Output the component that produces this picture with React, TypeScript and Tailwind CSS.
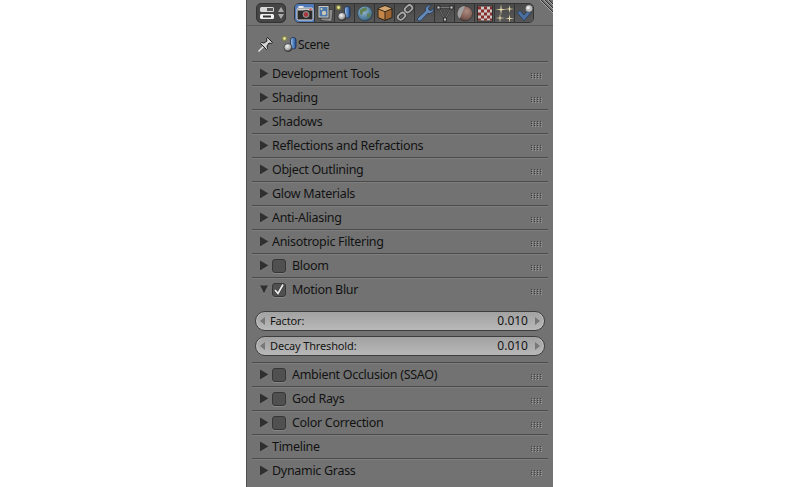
const font = "[font-family:'Noto_Sans',sans-serif]";

function SceneIcon({ id }: { id: string }) {
  return (
    <svg width="20" height="20" viewBox="0 0 20 20" className="shrink-0">
      <defs>
        <radialGradient id={id + "s"} cx="0.4" cy="0.35" r="0.7">
          <stop offset="0" stopColor="#f4f4f4" />
          <stop offset="0.6" stopColor="#a8a8a8" />
          <stop offset="1" stopColor="#2a2a2a" />
        </radialGradient>
        <linearGradient id={id + "c"} x1="0" x2="1" y1="0" y2="0">
          <stop offset="0" stopColor="#b4c6de" />
          <stop offset="0.5" stopColor="#5585c4" />
          <stop offset="1" stopColor="#1f4c92" />
        </linearGradient>
      </defs>
      <circle cx="3.500" cy="4.500" r="2.800" fill="#8b8a3c" opacity="0.7" />
      <circle cx="3.500" cy="4.500" r="1.400" fill="#e4e39a" />
      <rect x="9.500" y="3.500" width="5.500" height="11.500" rx="2.500" fill={`url(#${id}c)`} stroke="#1b2c4a" strokeWidth="0.800" />
      <circle cx="7" cy="13.500" r="4" fill={`url(#${id}s)`} stroke="#222" strokeWidth="0.600" />
    </svg>
  );
}

const tabIcons = [
  // camera
  <svg key="camera" width="20" height="20" viewBox="0 0 20 20" className="shrink-0">
    <rect x="2" y="5" width="16" height="12" rx="1.500" fill="#2b2b2b" stroke="#dedede" strokeWidth="1" />
    <rect x="3.500" y="3" width="5" height="2" fill="#e8e8e8" />
    <rect x="2.500" y="5.500" width="15" height="2" fill="#cfcfcf" />
    <circle cx="11" cy="11.500" r="4" fill="#8d8d8d" stroke="#111" strokeWidth="0.800" />
    <circle cx="11" cy="11.500" r="2.200" fill="#a8343c" />
    <rect x="14.500" y="5.800" width="2" height="1.200" fill="#d84545" />
  </svg>,
  // render layers
  <svg key="layers" width="20" height="20" viewBox="0 0 20 20" className="shrink-0">
    <rect x="6.500" y="6" width="11" height="12" fill="#8d8d8d" stroke="#3a3a3a" strokeWidth="0.800" transform="rotate(6 11 11)" />
    <rect x="3" y="2.500" width="11" height="12.500" fill="#c8c8c0" stroke="#2d2d2d" strokeWidth="0.800" />
    <rect x="4.500" y="4" width="8" height="9.500" fill="#4a76aa" />
    <circle cx="9" cy="10" r="2.200" fill="#c8c8b8" />
    <circle cx="6.500" cy="6" r="1" fill="#d8d8b4" />
  </svg>,
  <SceneIcon key="scene" id="tab" />,
  // world
  <svg key="world" width="20" height="20" viewBox="0 0 20 20" className="shrink-0">
    <defs>
      <radialGradient id="globe" cx="0.4" cy="0.35" r="0.75">
        <stop offset="0" stopColor="#9dbcd2" />
        <stop offset="0.7" stopColor="#4a7896" />
        <stop offset="1" stopColor="#263f52" />
      </radialGradient>
    </defs>
    <circle cx="10" cy="10.500" r="7.500" fill="url(#globe)" stroke="#2e3e4b" strokeWidth="0.700" />
    <path d="M5 7c2-2 5-3 7-2l-1 3-3 1-1 3-2-1zM12 11l3-1 1 2-2 3-2-1z" fill="#5f7f55" />
  </svg>,
  // object cube
  <svg key="cube" width="20" height="20" viewBox="0 0 20 20" className="shrink-0">
    <path d="M10 2 17.500 5.200v9.600L10 18 2.500 14.800V5.200z" fill="#2e2318" />
    <path d="M10 3 16.500 5.600 10 8.200 3.500 5.600z" fill="#d4a672" />
    <path d="M3.500 6.500l6 2.500v7.700l-6-2.500z" fill="#c48548" />
    <path d="M16.500 6.500l-6 2.500v7.700l6-2.500z" fill="#a06632" />
  </svg>,
  // constraints chain
  <svg key="chain" width="20" height="20" viewBox="0 0 20 20" fill="none" strokeLinecap="round" className="shrink-0">
    <g stroke="#333" strokeWidth="3.400">
      <rect x="9.500" y="3" width="8" height="5.500" rx="2.700" transform="rotate(-42 13.500 5.700)" />
      <rect x="2.500" y="10.500" width="8" height="5.500" rx="2.700" transform="rotate(-42 6.500 13.200)" />
    </g>
    <g stroke="#a8a8a8" strokeWidth="1.800">
      <rect x="9.500" y="3" width="8" height="5.500" rx="2.700" transform="rotate(-42 13.500 5.700)" />
      <rect x="2.500" y="10.500" width="8" height="5.500" rx="2.700" transform="rotate(-42 6.500 13.200)" />
    </g>
  </svg>,
  // wrench
  <svg key="wrench" width="20" height="20" viewBox="0 0 20 20" className="shrink-0">
    <path d="M3.500 18 2 15.800 10.500 8c-.6-2.500.5-5 3.200-5.800 1-.3 2-.2 2.600 0l-2.800 2.600.5 2.200 2.200.5 2.500-2.600c.4 2.200-.6 4.500-3 5.400-1 .4-2 .4-3 .1L5.500 18z" fill="#6288b8" stroke="#26364f" strokeWidth="0.800" />
  </svg>,
  // data mesh triangle
  <svg key="mesh" width="20" height="20" viewBox="0 0 20 20" className="shrink-0">
    <path d="M3.500 4.500H16.500L10 16.500z" fill="none" stroke="#2b2b2b" strokeWidth="1.600" />
    <path d="M3.500 4.500H16.500L10 16.500z" fill="none" stroke="#9a9a9a" strokeWidth="0.700" />
    <g fill="#cccccc" stroke="#1f1f1f" strokeWidth="0.800">
      <rect x="2" y="3" width="3" height="3" />
      <rect x="15" y="3" width="3" height="3" />
      <rect x="8.500" y="15" width="3" height="3" />
    </g>
  </svg>,
  // material
  <svg key="material" width="20" height="20" viewBox="0 0 20 20" className="shrink-0">
    <defs>
      <radialGradient id="mat" cx="0.6" cy="0.35" r="0.8">
        <stop offset="0" stopColor="#ad8b80" />
        <stop offset="0.6" stopColor="#7d5c54" />
        <stop offset="1" stopColor="#3d2c2a" />
      </radialGradient>
    </defs>
    <circle cx="10" cy="10.500" r="7.500" fill="url(#mat)" stroke="#2a2a2a" strokeWidth="0.600" />
    <path d="M10 3a7.500 7.500 0 0 0-5.300 12.800z" fill="#a0a0a0" />
  </svg>,
  // texture checker
  <svg key="texture" width="20" height="20" viewBox="0 0 20 20" className="shrink-0">
    <rect x="2.500" y="3" width="15" height="15" fill="#cfc8c4" stroke="#2d2d2d" />
    <path d="M3 3.500h3v3H3zM9 3.500h3v3H9zM15 3.500h2v3h-2zM6 6.500h3v3H6zM12 6.500h3v3h-3zM3 9.500h3v3H3zM9 9.500h3v3H9zM15 9.500h2v3h-2zM6 12.500h3v3H6zM12 12.500h3v3h-3zM3 15.500h3v2H3zM9 15.500h3v2H9zM15 15.500h2v2h-2z" fill="#862d2d" />
  </svg>,
  // particles
  <svg key="particles" width="20" height="20" viewBox="0 0 20 20" fill="#e8dcac" className="shrink-0">
    <path d="M6 1 6.700 6 12 6.600 6.700 7.200 6 12.500 5.300 7.200 0.500 6.600 5.300 6z" />
    <path d="M14.500 2 15.100 5.400 19 6 15.100 6.600 14.500 10 13.900 6.600 10 6 13.900 5.400z" />
    <path d="M5 10.500 5.600 14.500 10 15 5.600 15.600 5 19.500 4.400 15.600 0.500 15 4.400 14.500z" />
    <path d="M14.500 11 15.100 15 19.500 15.500 15.100 16 14.500 20 13.900 16 10 15.500 13.900 15z" />
  </svg>,
  // physics
  <svg key="physics" width="20" height="20" viewBox="0 0 20 20" className="shrink-0">
    <path d="M2 9.500 5 7.500 9 12 13 7 16.500 9 9 18z" fill="#4a6e9e" stroke="#22344f" strokeWidth="0.700" />
    <circle cx="14" cy="5.500" r="3.800" fill="#bcbcbc" stroke="#333" strokeWidth="0.600" />
    <circle cx="13.200" cy="4.700" r="1.600" fill="#e8e8e8" />
  </svg>,
];

function Grip() {
  return (
    <svg width="11" height="6" viewBox="0 0 11 6" fill="#3f3f3f">
      {[0, 2, 4].map((y) =>
        [0, 3, 6, 9].map((x) => (
          <g key={`${x}-${y}`}>
            <rect x={x + 1} y={y + 1} width="1" height="1" fill="#9a9a9a" />
            <rect x={x} y={y} width="1" height="1" />
          </g>
        )),
      )}
    </svg>
  );
}

function Arrow({ open }: { open?: boolean }) {
  return (
    <svg width="10" height="11" viewBox="0 0 10 11" className="shrink-0">
      {open ? (
        <>
          <path d="M1 2.500H9L5 10.500z" fill="#8a8a8a" />
          <path d="M1 1.500H9L5 9.500z" fill="#303030" />
        </>
      ) : (
        <>
          <path d="M1 1.500 9.500 6 1 11z" fill="#8a8a8a" />
          <path d="M1 0.500 9.500 5.500 1 10.500z" fill="#303030" />
        </>
      )}
    </svg>
  );
}

function Panel({ label, check, checked, open }: { label: string; check?: boolean; checked?: boolean; open?: boolean }) {
  return (
    <div className="h-[24px] mx-[5px] flex items-center pl-[7px] pr-[6px] border-t border-[#4a4a4a] shadow-[inset_0_1px_0_#7e7e7e]">
      <Arrow open={open} />
      {check && (
        <div className="ml-[3px] w-[14px] h-[14px] rounded-[3px] border border-[#363636] bg-[#505050] shadow-[0_1px_0_#858585] flex items-center justify-center shrink-0">
          {checked && (
            <svg width="14" height="14" viewBox="0 0 14 14" className="shrink-0">
              <path d="M3 7 6 10.500 11 1.500" fill="none" stroke="#333333" strokeWidth="3" />
              <path d="M3 7 6 10.500 11 1.500" fill="none" stroke="#ececec" strokeWidth="1.800" />
            </svg>
          )}
        </div>
      )}
      <span className={`${check ? "ml-[6px]" : "ml-[3px]"} text-[12.5px] tracking-[-0.3px] leading-[18px] text-[#121212]`}>{label}</span>
      <div className="ml-auto mt-[4px]">
        <Grip />
      </div>
    </div>
  );
}

function Slider({ label }: { label: string }) {
  return (
    <div className="h-[20px] rounded-full border border-[#3e3e3e] bg-gradient-to-b from-[#a2a2a2] to-[#b8b8b8] shadow-[inset_1px_0_0_#c4c4c4,inset_-1px_0_0_#c4c4c4] flex items-center px-[4px] text-[#141414]">
      <svg width="5" height="8" viewBox="0 0 5 8">
        <path d="M5 0V8L0 4z" fill="#777777" />
      </svg>
      <span className="ml-[5px] text-[11px] tracking-[-0.15px]">{label}</span>
      <span className="ml-auto mr-[7px] text-[12px]">0.010</span>
      <svg width="5" height="8" viewBox="0 0 5 8">
        <path d="M0 0V8L5 4z" fill="#777777" />
      </svg>
    </div>
  );
}

export default function App() {
  return (
    <div className="h-[487px] overflow-hidden bg-white">
      <div className={`relative ml-[246px] w-[307px] h-[487px] overflow-hidden bg-[#727272] border-l border-[#4f4f4f] ${font}`}>
        <div className="h-[26px] border-b border-[#5a5a5a] flex items-start pt-[3px] pl-[9px]">
          <div className="w-[30px] h-[20px] rounded-[5px] bg-[#454545] border border-[#333333] flex items-center justify-center gap-[2px]">
            <svg width="17" height="15" viewBox="0 0 17 15">
              <rect x="1" y="1" width="14" height="5" rx="1.500" fill="#d8d8d8" />
              <rect x="8" y="2" width="6" height="3" fill="#555555" />
              <rect x="1" y="8" width="14" height="5" rx="1.500" fill="#f2f2f2" />
              <rect x="4" y="9.500" width="8" height="2" fill="#333333" />
            </svg>
            <svg width="6" height="14" viewBox="0 0 6 14" fill="#a8a8a8">
              <path d="M3 1 6 6H0zM3 13 0 8H6z" />
            </svg>
          </div>
          <div className="ml-[8px] flex h-[20px] rounded-[5px] overflow-hidden border border-[#333333] w-[240px]">
            {tabIcons.map((icon, i) => (
              <div
                key={i}
                className={`w-[20px] shrink-0 flex items-center justify-center border-r border-[#333333] last:border-r-0 ${
                  i === 0 ? "bg-[#4f79b8]" : "bg-gradient-to-b from-[#4a4a4a] to-[#575757]"
                }`}
              >
                {icon}
              </div>
            ))}
          </div>
        </div>
        <svg width="13" height="13" viewBox="0 0 13 13" className="absolute right-0 top-0">
          <path d="M1 0 13 12M5 0 13 8M9 0 13 4" stroke="#2f2f2f" strokeWidth="1" />
          <path d="M0 0 13 13M4 0 13 9M8 0 13 5" stroke="#b5b5b5" strokeWidth="0.800" />
        </svg>

        <div className="h-[35px] flex items-center pl-[9px]">
          <svg width="20" height="20" viewBox="0 0 20 20" className="shrink-0">
            <path d="M2.500 17.500 8 12" stroke="#e8e8e8" strokeWidth="1.500" />
            <path d="M11.500 3.500 16.500 8.500 15 9.500 13 9 11 12 11.500 14.500 10.500 15.500 4.500 9.500 5.500 8.500 8 9 11 7 10.500 5z" fill="#d4d4d4" stroke="#1f1f1f" strokeWidth="1" />
          </svg>
          <div className="ml-[5px]">
            <SceneIcon id="ctx" />
          </div>
          <span className="ml-[-3px] mt-[2px] text-[12px] tracking-[-0.4px] text-[#121212]">Scene</span>
        </div>

        <Panel label="Development Tools" />
        <Panel label="Shading" />
        <Panel label="Shadows" />
        <Panel label="Reflections and Refractions" />
        <Panel label="Object Outlining" />
        <Panel label="Glow Materials" />
        <Panel label="Anti-Aliasing" />
        <Panel label="Anisotropic Filtering" />
        <Panel label="Bloom" check />
        <Panel label="Motion Blur" check checked open />
        <div className="h-[61px] px-[8px] pt-[10px] flex flex-col gap-[5px]">
          <Slider label="Factor:" />
          <Slider label="Decay Threshold:" />
        </div>
        <Panel label="Ambient Occlusion (SSAO)" check />
        <Panel label="God Rays" check />
        <Panel label="Color Correction" check />
        <Panel label="Timeline" />
        <Panel label="Dynamic Grass" />
      </div>
    </div>
  );
}
